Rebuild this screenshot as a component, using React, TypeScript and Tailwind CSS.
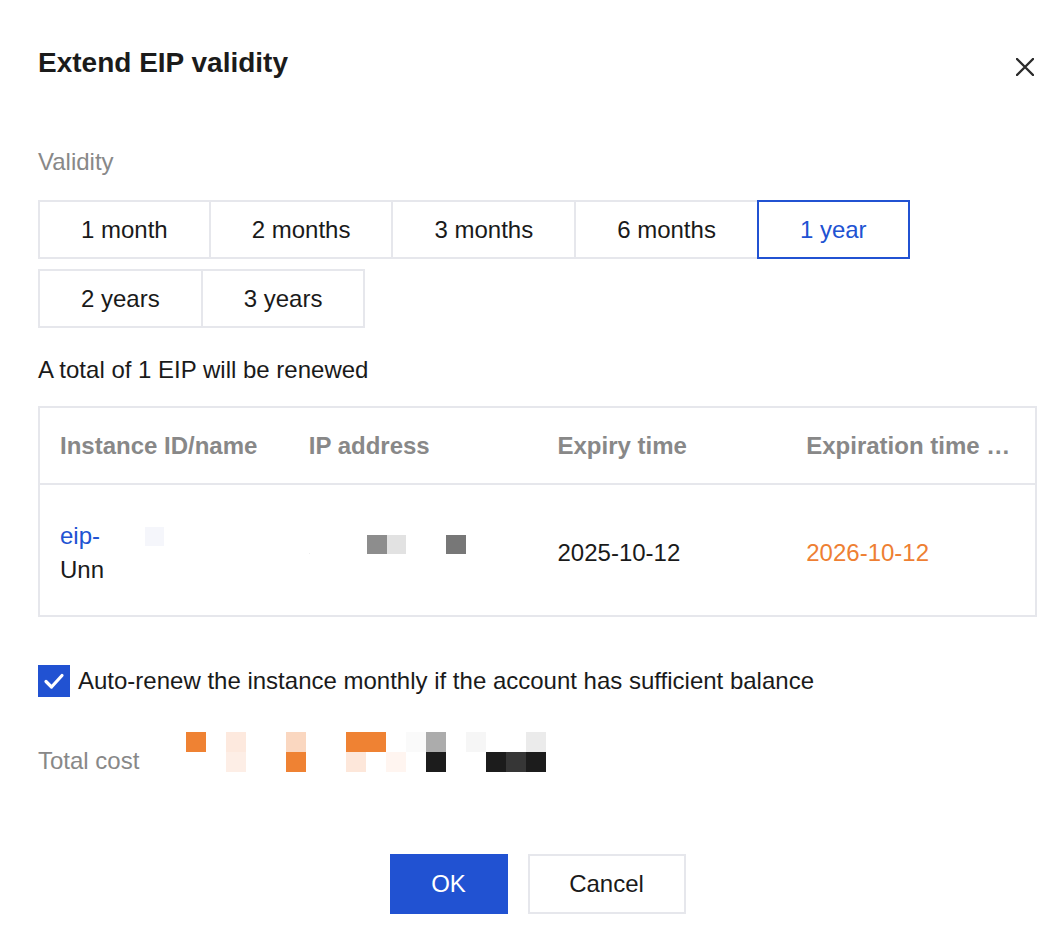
import React from 'react';

const periods = ['1 month', '2 months', '3 months', '6 months', '1 year'];
const periodsTwo = ['2 years', '3 years'];

// pixelated cost blocks, [top row, bottom row], 20px each
const costTop = ['#ef8233', '#ffffff', '#fde9de', '#ffffff', '#ffffff', '#fad7c0', '#ffffff', '#ffffff', '#ef8233', '#ef8233', '#ffffff', '#fafafa', '#acacac', '#ffffff', '#f6f6f6', '#ffffff', '#ffffff', '#ebebeb'];
const costBottom = ['#ffffff', '#ffffff', '#fdeee6', '#ffffff', '#ffffff', '#ef8233', '#ffffff', '#ffffff', '#fde7da', '#ffffff', '#fff5f0', '#ffffff', '#1c1c1c', '#ffffff', '#ffffff', '#1c1c1c', '#363636', '#1c1c1c'];

const PeriodButton = ({ label, active, first }: { label: string; active?: boolean; first?: boolean }) => (
    <button
        className={
            'h-[59px] px-[41px] border-2 text-[24px] leading-none bg-white ' +
            (first ? '' : '-ml-[2px] ') +
            (active ? 'relative z-10 border-[#2152d2] text-[#2152d2]' : 'border-[#e6e7ec] text-[#1a1a1a]')
        }
    >
        {label}
    </button>
);

const App = () => {
    return (
        <div
            className="w-[1060px] h-[952px] bg-white pl-[38px] pr-[23px] text-[#1a1a1a]"
            style={{ fontFamily: '"Liberation Sans", Arial, sans-serif' }}
        >
            {/* header */}
            <div className="flex items-start justify-between pt-[43px]">
                <h1 className="text-[28px] leading-[40px] font-bold text-[#1b1b1b]">Extend EIP validity</h1>
                <button className="mt-[4px] mr-[3px] h-[40px] flex items-center">
                    <svg width="18" height="18" viewBox="0 0 18 18">
                        <path d="M1 1L17 17M17 1L1 17" stroke="#2b2b2b" strokeWidth="2.4" strokeLinecap="round" />
                    </svg>
                </button>
            </div>

            <div className="mt-[59px] text-[24px] leading-[32px] text-[#888888]">Validity</div>

            <div className="mt-[22px] flex">
                {periods.map((p, i) => (
                    <PeriodButton key={p} label={p} first={i === 0} active={p === '1 year'} />
                ))}
            </div>
            <div className="mt-[10px] flex">
                {periodsTwo.map((p, i) => (
                    <PeriodButton key={p} label={p} first={i === 0} />
                ))}
            </div>

            <div className="mt-[26px] text-[24px] leading-[32px]">A total of 1 EIP will be renewed</div>

            {/* table */}
            <div className="mt-[20px] border-2 border-[#e6e7ec]">
                <div className="grid grid-cols-4 h-[77px] border-b-2 border-[#e6e7ec] items-center text-[24px] font-bold text-[#888888]">
                    <div className="pl-[20px]">Instance ID/name</div>
                    <div className="pl-[20px]">IP address</div>
                    <div className="pl-[20px]">Expiry time</div>
                    <div className="pl-[20px] whitespace-nowrap">Expiration time …</div>
                </div>
                <div className="grid grid-cols-4 h-[130px] pt-[6px] items-center text-[24px]">
                    <div className="pl-[20px] leading-[34px]">
                        <div className="flex items-center">
                            <span className="text-[#2152d2]">eip-</span>
                            <span className="ml-[45px] w-[19px] h-[19px] bg-[#f5f6fb]" />
                        </div>
                        <div>Unn</div>
                    </div>
                    <div className="pl-[20px] mb-[18px] flex items-end">
                        <span className="w-[1px] h-[1px] bg-[#eeeeee]" />
                        <span className="ml-[57px] w-[20px] h-[19px] bg-[#8d8d8d]" />
                        <span className="w-[19px] h-[19px] bg-[#e2e2e2]" />
                        <span className="ml-[40px] w-[20px] h-[19px] bg-[#777777]" />
                    </div>
                    <div className="pl-[20px]">2025-10-12</div>
                    <div className="pl-[20px] text-[#ee7f33]">2026-10-12</div>
                </div>
            </div>

            {/* auto renew */}
            <label className="mt-[48px] flex items-center gap-[8px] text-[24px] leading-[32px]">
                <span className="w-[32px] h-[32px] bg-[#2152d2] flex items-center justify-center">
                    <svg width="22" height="18" viewBox="0 0 22 18">
                        <path d="M3 9.5L8.5 15L19 3.5" stroke="white" strokeWidth="3.2" fill="none" strokeLinecap="round" strokeLinejoin="round" />
                    </svg>
                </span>
                Auto-renew the instance monthly if the account has sufficient balance
            </label>

            {/* total cost */}
            <div className="mt-[35px] flex items-start h-[40px]">
                <div className="mt-[13px] w-[148px] text-[24px] leading-[32px] text-[#888888]">Total cost</div>
                <div className="flex flex-col">
                    <div className="flex">
                        {costTop.map((c, i) => (
                            <span key={i} className="w-[20px] h-[20px]" style={{ backgroundColor: c }} />
                        ))}
                    </div>
                    <div className="flex">
                        {costBottom.map((c, i) => (
                            <span key={i} className="w-[20px] h-[20px]" style={{ backgroundColor: c }} />
                        ))}
                    </div>
                </div>
            </div>

            {/* footer */}
            <div className="mt-[82px] flex justify-center gap-[20px]">
                <button className="w-[118px] h-[60px] bg-[#2152d2] text-white text-[24px]">OK</button>
                <button className="w-[158px] h-[60px] border-2 border-[#e6e7ec] bg-white text-[24px] text-[#1a1a1a]">Cancel</button>
            </div>
        </div>
    );
};

export default App;
